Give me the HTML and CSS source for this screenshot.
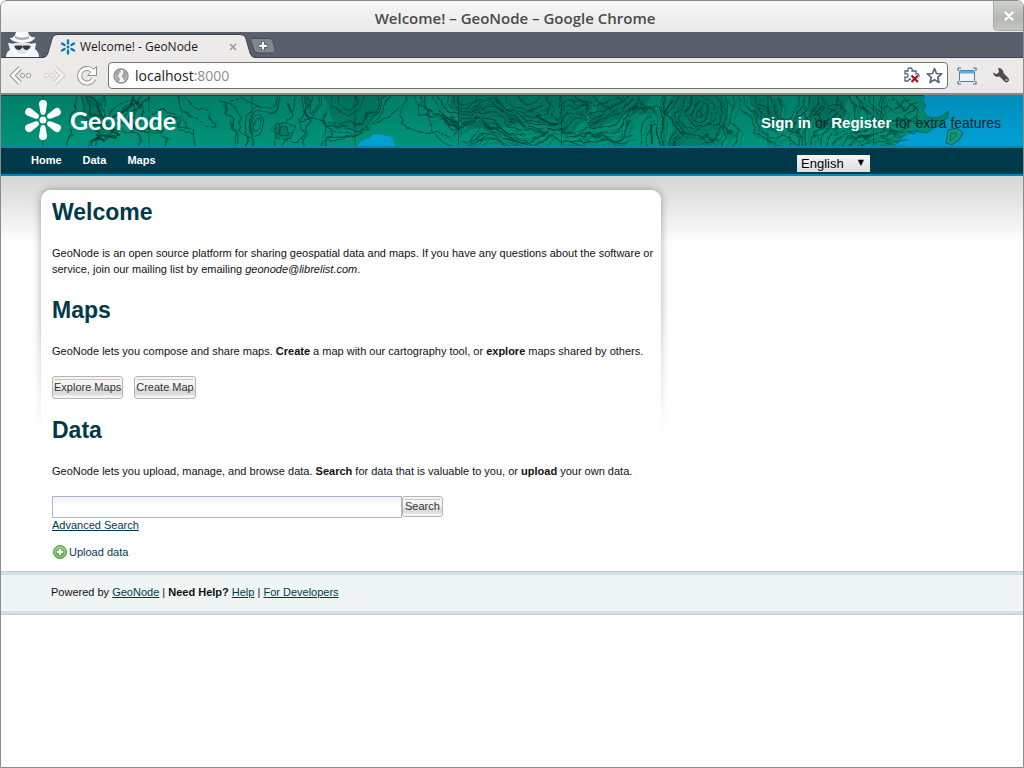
FILE: index.html
```html
<!DOCTYPE html>
<html lang="en">
<head>
<meta charset="utf-8">
<title>Welcome! - GeoNode</title>
<link rel="stylesheet" href="styles.css">
</head>
<body>
<div class="window">
  <div class="titlebar">
    <span class="title">Welcome! – GeoNode – Google Chrome</span>
    <button class="close" aria-label="Close window"><svg width="10" height="10" viewBox="0 0 10 10"><path d="M1.5 1.5l7 7M8.5 1.5l-7 7" stroke="#fff" stroke-width="2.4" stroke-linecap="round"/></svg></button>
  </div>

  <div class="tabstrip">
    <svg class="spy" width="34" height="25" viewBox="0 0 34 25">
      <path d="M1 25q0-5 4-7l-2-7q6 1 10 1h8q5 0 10-1l-1 6q4 3 4 8z" fill="#f1f4f8"/>
      <path d="M9 11h16v4q-1 8-8 8t-8-8z" fill="#dfe4ec"/>
      <path d="M12 13.500h4.500l1 .8 1-.8H23l3 .5-2 3q-3 2-5 0l-1.500-2-1.500 2q-2 2-5 0l-2-3z" fill="#343941"/>
      <path d="M8 17l5 6h8l6-6" fill="none" stroke="#fff" stroke-width="2.500"/>
      <path d="M5 6q5 0 6-6h12q1 6 7 5 0 3-6 5-7 2-13 0-6-2-6-4z" fill="#fafbfc"/>
      <path d="M10 4q7 3 14 0v2.500q-7 3-14 0z" fill="#a9aeb7"/>
    </svg>
    <div class="tab">
      <svg class="tab-edge" width="15" height="24" viewBox="0 0 15 24"><path d="M0 24Q4 23 5 19L9 5Q10 1 14 1h1v23z" fill="#edebe9"/><path d="M0 23.500Q4 23 5 19L9 5Q10 .5 15 .5" fill="none" stroke="#3f454f"/></svg>
      <div class="tab-body">
        <svg class="favicon" width="16" height="16" viewBox="0 0 16 16"><g stroke="#107aa6" stroke-width="2.400" stroke-linecap="round"><path d="M8 1.500v3M8 11.500v3M2 4.500l2.600 1.500M11.400 10l2.600 1.500M14 4.500l-2.600 1.500M4.600 10L2 11.500"/></g><circle cx="8" cy="8" r="1.500" fill="#107aa6"/></svg>
        <span>Welcome! - GeoNode</span>
        <button class="tab-close" aria-label="Close tab"><svg width="8" height="8" viewBox="0 0 8 8"><path d="M1 1l6 6M7 1L1 7" stroke="#999" stroke-width="1.600"/></svg></button>
      </div>
      <svg class="tab-edge" width="15" height="24" viewBox="0 0 15 24"><path d="M15 24Q11 23 10 19L6 5Q5 1 1 1H0v23z" fill="#edebe9"/><path d="M15 23.500Q11 23 10 19L6 5Q5 .5 0 .5" fill="none" stroke="#3f454f"/></svg>
    </div>
    <button class="newtab" aria-label="New tab"><svg width="26" height="16" viewBox="0 0 26 16"><path d="M2 .5h17q3 0 4 3l2 8q1 3-2 3.500H8q-3 0-4-3L1 3Q.5 1 2 .5z" fill="#808791" stroke="#444b55"/><path d="M13 3.500v8.500M8.800 7.800h8.500" stroke="#4a505a" stroke-width="4"/><path d="M13 4v7.500M9.300 7.800h7.500" stroke="#fff" stroke-width="2.200"/></svg></button>
  </div>

  <div class="toolbar">
    <button aria-label="Back"><svg width="24" height="22" viewBox="0 0 24 22"><path d="M11 3L3.500 10.500 11 18" fill="none" stroke="#8f8f8d" stroke-width="4.600"/><path d="M11 3L3.500 10.500 11 18" fill="none" stroke="#fafafa" stroke-width="2.800"/><g fill="#f4f4f3" stroke="#9b9b99"><circle cx="13.500" cy="10.500" r="2.200"/><circle cx="19.500" cy="10.500" r="2.200"/></g></svg></button>
    <button aria-label="Forward"><svg width="24" height="22" viewBox="0 0 24 22"><path d="M12 3l7.500 7.500L12 18" fill="none" stroke="#c9c9c7" stroke-width="4.600"/><path d="M12 3l7.500 7.500L12 18" fill="none" stroke="#f3f3f2" stroke-width="2.800"/><g fill="#efefed" stroke="#cfcfcd"><circle cx="3.500" cy="10.500" r="2.200"/><circle cx="9.500" cy="10.500" r="2.200"/></g></svg></button>
    <button class="reload" aria-label="Reload"><svg width="22" height="22" viewBox="0 0 22 22"><path d="M17.500 14A7.300 7.300 0 1 1 16 5.500" fill="none" stroke="#8f8f8d" stroke-width="5"/><path d="M11.500 10.500h9V1.500l-3 3-3 3z" fill="#fafafa" stroke="#8f8f8d"/><path d="M17.500 14A7.300 7.300 0 1 1 16 5.500l1 2.500" fill="none" stroke="#fafafa" stroke-width="3.200"/></svg></button>
    <div class="address">
      <svg width="16" height="16" viewBox="0 0 16 16"><circle cx="8" cy="8" r="7" fill="#f3f3f3" stroke="#8b8b8b" stroke-width="1.400"/><path d="M2 6q2-4 5-4l1 2-2 1 0 2-2 1 2 1 1 2-1 3Q2 12 2 6zM10 2.500q4 1 4 4.500l-1 4-2 2-1-3-1.500-2L10 6z" fill="#a5a5a5"/></svg>
      <span class="url" role="textbox" aria-label="Address">localhost<i>:8000</i></span>
      <svg width="17" height="17" viewBox="0 0 17 17"><path d="M2 4h3Q4 1 7 1t2 3h4v3q3-1 3 2t-3 2v3H9q-1-2-2-2t-2 2H2v-4q3 1 3-1.500T2 7z" fill="#fff" stroke="#4b627b" stroke-width="1.300"/><path d="M8.500 8.500l6.500 6.500M15 8.500L8.500 15" stroke="#fff" stroke-width="4"/><path d="M8.500 8.500l6.500 6.500M15 8.500L8.500 15" stroke="#b90624" stroke-width="2.200"/></svg>
      <svg class="star" width="17" height="17" viewBox="0 0 17 17"><path d="M8.500 1.500l2 5 5.200.3-4 3.500 1.300 5.200-4.500-2.900L4 15.500l1.300-5.200-4-3.500 5.200-.3z" fill="#fff" stroke="#5c6680" stroke-width="1.700" stroke-linejoin="round"/></svg>
    </div>
    <button class="fit" aria-label="Window size"><svg width="20" height="18" viewBox="0 0 20 18"><path d="M1 4V1h3M16 1h3v3M19 14v3h-3M4 17H1v-3" fill="none" stroke="#3f79a6" stroke-width="1.200"/><rect x="2.500" y="3.500" width="15" height="11" rx="1" fill="#eef3f7" stroke="#4281b0"/><path d="M3 4h14v2.500H3z" fill="#6da5d3"/></svg></button>
    <button aria-label="Settings"><svg width="18" height="17" viewBox="0 0 18 17"><path d="M6 1q5 0 5.500 5l5.200 5.500q1 2-.7 3.300t-3.200 0L7.500 9.500Q2 11 1 5.500l3.500 1.800L7 5z" fill="#4c4c4c"/><circle cx="14.500" cy="13" r="1" fill="#ccc"/></svg></button>
  </div>

  <header class="banner">
    <svg class="map" viewBox="0 0 1022 51" preserveAspectRatio="xMidYMin slice" aria-hidden="true">
      <defs><linearGradient id="land" x1="0" y1="0" x2="0" y2="1"><stop offset="0" stop-color="#007d69"/><stop offset="1" stop-color="#009478"/></linearGradient>
      <linearGradient id="sea" x1="0" y1="0" x2="0" y2="1"><stop offset="0" stop-color="#008cba"/><stop offset="1" stop-color="#00a0d4"/></linearGradient>
      <filter id="wobble" x="0" y="0" width="1022" height="51" filterUnits="userSpaceOnUse"><feTurbulence type="fractalNoise" baseFrequency=".07" numOctaves="2" seed="4" result="n"/><feDisplacementMap in="SourceGraphic" in2="n" scale="11" xChannelSelector="R" yChannelSelector="G"/></filter></defs>
      <rect width="1022" height="51" fill="url(#sea)"/>
      <path d="M0 0h923l-1 6 3 5-3 4 4 7 8 1 7-2 6-5v7l-5 2-1 5-7 2-8 6-12-2-11 4-7 9-1 3H0z" fill="url(#land)"/>
      <path d="M947 35l9-2 6 5-4 7-7 5-6-2 1-6z" fill="#149782" stroke="#075d5b"/>
      <path d="M357 51l3-5 8-3 5-4 9 1 9 2 3 9z" fill="#00a0d4"/>
      <g fill="#003c35" opacity=".22" filter="url(#wobble)">
        <path d="M320-5h65l-9 25-17 16-24-5zM445-5h160l-35 44-48-12-30 8-30-4zM605-5h50l-12 22-32 8-28 14zM670-5h50l10 33-19 23h-42zM800-5h50l-13 42-22-12z"/>
        <path d="M78 0l27 3-5 17 11 23-16-3-13-19zM268 37l9-8 17 9-6 8zM750 0l32 3-11 34-18-15z"/>
      </g>
      <g fill="none" stroke-linejoin="round" filter="url(#wobble)">
      <g id="contours" stroke="#003a2f" stroke-width="1.100" stroke-opacity=".72">
        <path d="M68 55l2-16-4-13 8-12-2-18M76-4q10 26 17 35t3 24M82-4q4 17 11 23t9 14l9 4-8 6-22 12M86-4q11 8 11 21l8 15 9 6M91 2q10 5 12 12t0 13q9 6 12 14l-19 4-9 10M96-4q12 6 9 19l-2 10 12 13"/>
        <path d="M84 3q12-1 13 9t6 13-3 5-9-9-7-18zM88 6q8 2 8 10l3 7M112 15q5-10 14-10l13 3q8 12-1 19l-11 9-15-2q-4-10 0-19zM117 17q11-10 18-5 4 10-9 17-9 0-9-12z"/>
        <path d="M143-4l-5 13-11 4-5 9-12 5M147-3q-2 13-11 17l-9 7 4 14 9 5-6 15M129 24q8 9 17 11 16 2 22 7l-5 13M132 30q9 9 20 9 11 0 12-7l8-7 7 8q11 0 15 5l-2 17M152 22l9 8 8-7 9 2 2 12q9 0 14 7M150 20q12-8 17-2l13 4 9 12"/>
        <path d="M181-4q6 12 15 17 11 2 16 11l2 8-7-2-12-7-14-7-7-20M218 8l9 4-2 5 8 8-3 9 7 6-1 15M224 10q9 0 11 5l5 10-3 8 8 6 2 16M230 8l8-4 13 2 5 5M229 25l2 8 5 3-4 19"/>
        <path d="M246 55q1-17-2-28 0-12 11-16l12 3q9 0 9-17M252 55l-3-22q-3-16 8-17l9 4q11 0 11-11l2-13M251 23q11-4 14 8-4 11-12 8-6-8-2-16zM254 26q8-2 7 5-5 6-8 1zM273 55q0-12 5-18l-2-9q15 0 15-9l3-23M278 55l6-8 10 2q7 0 7-10l-3-15q7 0 7-12V-4M273 31q7-9 19 2 2 7-8 13-9-2-11-15zM279 32q8-1 9 5-6 6-9-1zM303 55v-18l7-12-5-9 7-20"/>
        <path d="M303-4q-4 24 8 26 8-3 8-26M307-4q-1 20 5 22 5-4 4-22M325 11l-4 15 10 8-7 21M299 27q12-6 16-4l10 7-3 25M330-4q0 18 3 18l14 7 11-5q2-16 2-20M335-4q0 15 4 15l11 3 5-6-1-12M327 28q10-3 15-1 15 3 18 1 15-15 15-15l8-17M326 31q14-3 20 1 13 3 16 1l13-15 12-22M326 36q14-2 20 2 11 1 14-2 13-8 18-14l12-26M326 42q19 2 37-5l18-12 17-14M325 47q13 1 22-6l15-4"/>
        <path d="M404 2q-5 17-2 22l-2 5q3 9 9 9l17-2 23 4q8 0 8-13l-7-4-16-1q-15-3-15-9l1-17M412-4q0 14 4 14l17 8 19 8q6 8 6 8l14-9q10-3 10 2l15 8M419-4q4 18 8 18l18 14q9 5 19 5l13-9q10-1 16 4l13 10 19 2"/>
        <path d="M430-4q8 27 16 27l12 5q8 0 16-10 9-3 18-1l14 10q10 8 20 8l22 6M437-4q6 21 12 21l12 5q7 0 14-8l17-2q7 0 15 12l18 8 22 8M444-4q4 17 9 17l9 5q7 0 13-7 9-6 17-3 8 6 16 12 9 9 18 9l22 3M450-4l7 15 9 3q6-8 11-8l17-2 18 14 13 7 20 3M457-4q3 11 5 11h9l9-11M492-4q11 20 21 20l17 5q8 0 15-5l3-16M502-4q8 16 16 16l13 4 11-4M510-4l15 13q6 0 12-2l4-11M423-4q10 53 20 53l17 5q9 0 18-10l18 2q8 0 15 12l18 1 18 8"/>
        <path d="M457 46q6 2 12 0l13-17q5 0 10 3 9 0 18 8l17 6 24-9q7-2 13-2l19 7q7-5 13-1 5 0 10 4l21 1M467 51l10-10q8-6 15-2l17 5 22 7M483 31q5 0 10 3 10 4 19 10l17 4q11 0 21-6l20 5 16 4M475 47q7-7 13-7l18 8 10 3M540 30q8 4 16 1 6-12 12-12l15-2q2 9 5 9 7 0 14-3l14-9M547 36q9 2 17-3l8-8q6-6 11-2l8 7 11-7 16-4 14-17"/>
        <path d="M548 17l8 8q6-12 12-12l15-3 9 13 8-2q7-10 13-10l14-11M562-4l-3 16 10-4q6-4 11-2l11 12 12-2q9-6 18-16M575-4q4 13 8 13l11 3 13-7 11-3M589-4q7 13 14 13l12 2 13-11M559 37q12-3 22 0 12-5 24-4 11-1 17-14l13-10 4-9M564 43l17-4 17 1q7 2 14-1l11-9q5-17 10-17l10-3M569 47q15-4 24-2l14 1q9 0 17-7 7-24 14-24l12-4q6 8 6 16l3 28M636 5l8 11q6-6 12-4 6 0 6 12l-1 31M638 55l2-20q4-17 8-17M645 53l5-26 6 4 2 24M630 42l-9-4q0-10 6-16"/>
        <path d="M662-4v59M666-3l-2 19 9 11-5 28M677-4l-4 15-7 8 10 14-6 22M686-4q-6 23-12 23l7 17-12 19M694-4q-7 22-14 22 0 14 7 14 6 6 12 3l10-4q9-3 9 3 0 10-5 10l-10 3-17 8M688 8q8-8 15-5 10 0 10 6 2 14-1 18-6 8-12 6-10 0-10-6-5-8-2-19zM692 12q6-6 11-4 7 1 5 6 1 8-2 10-4 5-9 3-9-4-5-15zM696 15q8-2 7 5-5 4-7-5zM677 34l19 9 12-3 11 7"/>
        <path d="M716-4q2 21 4 21l-3 15 9 8-7 15M724-4l2 22-4 14 9 9M730-4l4 18-4 14q6 5 6 11l-7 16M737-4q1 19 3 19l11 4q0 18 6 18 8 11 16 11l14 7M742-4q2 17 5 17l10 5q-2 15 1 15 7 10 15 10l18-2 8 14M748-4q2 15 5 15l10 5q-2 12 1 12 5 8 11 8l14-4q11 3 11 9l1 14M756-4q-1 13 1 13l11 3q-1 14 2 14 10-2 11 1l7 9 9 2q8-14 9-14l-3-14"/>
        <path d="M767-4q7 17 6 25l14 9 10-8 8-26M775-4q8 21 4 25l8 4 8-8 4-21M789 55l2-24q18-18 18-24l-2-11M797 55l1-23q17-16 17-22l1-14M804 55v-18q6-22 17-22V-4M810 55l4-17q14-12 14-15l12-27M817 55q1-21 10-23l15-4 3-12-9-13M823 55l7-17q9-2 18-2 8-2 8-12-1-17-6-17l-7-11M829 55l8-14q9-1 17-1 11-2 11-8l-1-13-11-23M837 55l11-12 23-2q11-2 11-10l-3-12 6-23"/>
        <path d="M811 23q5-11 15-14 14-2 14 3 4 5 1 9-2 8-9 8l-14 1zM816 22q7-9 15-9 6 0 6 5 0 6-5 6l-9 3zM845 55l9-11q13-6 26-2l15 6 12-3M854 55l9-8 15 1 9 3M855-4l2 16 10 8q6 5 4 10l-10 9M864-4l1 14q12 5 12 10 0 11 2 11l14 5q14 0 14-8l-4-8 12-7M871-4q-1 13 1 13l10 9q0 9 5 9l15-3q7 0 13 5l15-4M881-4l-2 13 15 7 14-12M891-4v11l12 8 15-8M900-4l6 12M872 31q13-9 23-6l13 1 7-7M889 51l-8-9q8-10 15-8l15 5 5-6M908 9q10 4 10 9l-7 10"/>
      </g>
      </g>
      <svg x="435" width="470" height="51" viewBox="435 0 470 51" opacity=".38"><g transform="translate(4 4)"><g filter="url(#wobble)" fill="none"><use href="#contours"/></g></g></svg>
      <path d="M923 0l-1 6 3 5-3 4 4 7 8 1 7-2 6-5v7l-5 2-1 5-7 2-8 6-12-2-11 4-7 9M950 38l6 0-3 5-4 3z" fill="none" stroke="#00584c" opacity=".7"/>
      <g fill="none" stroke="#002e25" stroke-linecap="round"><path d="M132 1l-2 10-8 6-10 5M132 3l6 9M89 47l12-7 14 3M96 40l7 6M109 35l9 5M443 22l5 7 6 2M536 21l6 4 8 4h6M287 9l3 8M650 30l1 18M671 6l-8 12M632 15l4-4" stroke-width="2" opacity=".65"/><path d="M42 0v51M148 0v51M251 0v51M354 0v51M457.500 0v51M560.500 0v51M663 0v51M767 0v51M872.500 0v51" opacity=".45"/></g>
      <path d="M0 .5h923" stroke="#233f26"/>
    </svg>
    <div class="banner-row">
      <a class="logo" href="#"><svg width="40" height="42" viewBox="0 0 40 42"><g fill="#fff"><circle cx="20" cy="21" r="3.500"/><path id="petal" d="M16 5q0-4 4-4t4 4l-1.500 9q-.5 2-2.500 2t-2.500-2z"/><use href="#petal" transform="rotate(60 20 21)"/><use href="#petal" transform="rotate(120 20 21)"/><use href="#petal" transform="rotate(180 20 21)"/><use href="#petal" transform="rotate(240 20 21)"/><use href="#petal" transform="rotate(300 20 21)"/></g></svg><span>GeoNode</span></a>
      <div class="login"><a href="#">Sign in</a> or <a href="#">Register</a> for extra features</div>
    </div>
  </header>

  <nav class="nav">
    <a href="#">Home</a><a href="#">Data</a><a href="#">Maps</a>
    <span class="language"><select aria-label="Language"><option>English</option></select></span>
  </nav>

  <main class="content">
    <div class="panel">
      <div class="panel-glow"></div>
      <div class="panel-body">
        <h1>Welcome</h1>
        <p>GeoNode is an open source platform for sharing geospatial data and maps. If you have any questions about the software or service, join our mailing list by emailing <em>geonode@librelist.com</em>.</p>
        <h1>Maps</h1>
        <p>GeoNode lets you compose and share maps. <b>Create</b> a map with our cartography tool, or <b>explore</b> maps shared by others.</p>
        <div class="actions"><button class="btn">Explore Maps</button><button class="btn">Create Map</button></div>
        <h1>Data</h1>
        <p>GeoNode lets you upload, manage, and browse data. <b>Search</b> for data that is valuable to you, or <b>upload</b> your own data.</p>
        <form class="search"><input type="text" aria-label="Search data"><button class="btn" type="button">Search</button></form>
        <a class="advanced" href="#">Advanced Search</a>
        <a class="upload" href="#"><svg width="16" height="16" viewBox="0 0 16 16"><defs><linearGradient id="add" x1="0" y1="0" x2="0" y2="1"><stop offset="0" stop-color="#8cc97c"/><stop offset="1" stop-color="#4ba33d"/></linearGradient></defs><circle cx="8" cy="8" r="6.500" fill="url(#add)" stroke="#50a046"/><circle cx="8" cy="8" r="5" fill="none" stroke="#a5d69a"/><path d="M8 5v6M5 8h6" stroke="#fff" stroke-width="2.200"/></svg>Upload data</a>
      </div>
    </div>
  </main>

  <footer class="footer">Powered by <a href="#">GeoNode</a> | <b>Need Help?</b> <a href="#">Help</a> | <a href="#">For Developers</a></footer>
</div>
</body>
</html>
```
FILE: styles.css
```css
* { box-sizing: border-box; }
body {
  margin: 0;
  background: #fff;
  color: #111;
  font: 11px/16px "Liberation Sans", Arial, sans-serif;
}
button { border: 0; padding: 0; background: none; font: inherit; }
svg { display: block; flex: none; }

.window {
  display: flex;
  flex-direction: column;
  min-height: 100vh;
  border: 1px solid #8b8b8b;
  border-radius: 7px 7px 0 0;
  overflow: hidden;
}

.titlebar {
  display: grid;
  grid-template-columns: 1fr 30px;
  height: 31px;
  background: linear-gradient(#f7f7f7, #e9e9e9);
}
.title {
  padding-left: 36px;
  text-align: center;
  color: #4a4a4a;
  font: 600 15px/34px "Open Sans", sans-serif;
}
.close {
  display: grid;
  place-items: center;
  height: 30px;
  border: 1px solid #aaacaa;
  border-width: 0 0 1px 1px;
  border-radius: 0 0 0 5px;
  background: linear-gradient(#cfd1cf, #b4b7b4 60%, #c4c7c4);
}

.tabstrip {
  display: flex;
  align-items: flex-end;
  height: 26px;
  padding-left: 4px;
  background: #59606c;
  border-bottom: 1px solid #3c424c;
}
.tab { display: flex; margin: 0 0 -1px 4px; }
.tab-body {
  display: flex;
  align-items: center;
  width: 182px;
  background: #edebe9;
  border-top: 1px solid #3f454f;
  color: #1a1a1a;
  font: 12px/22px "Open Sans", sans-serif;
}
.tab-body span { flex: 1; padding-left: 4px; }
.favicon { margin-left: 2px; }
.tab-close { margin-right: 3px; }
.newtab { align-self: center; margin: 2px 0 0 -5px; }

.toolbar {
  display: flex;
  align-items: center;
  gap: 10px;
  height: 37px;
  padding: 1px 13px 1px 8px;
  background: linear-gradient(#edebe9, #e9e8e6);
  border-bottom: 2px solid #8a8885;
}
.reload { margin-left: -1px; }
.address {
  display: flex;
  flex: 1;
  align-items: center;
  gap: 6px;
  height: 27px;
  padding: 0 4px;
  background: #fff;
  border: 1px solid #74736f;
  border-radius: 4px;
}
.url { flex: 1; color: #1a1a1a; font: 14px/24px "Open Sans", sans-serif; }
.url i { color: #8c8c8c; font-style: normal; }
.fit { margin: 0 5px 0 -1px; }

.banner {
  display: grid;
  height: 51px;
  overflow: hidden;
  background: #008cba;
}
.map, .banner-row { grid-area: 1 / 1; }
.map { width: 100%; min-height: 51px; }
.banner-row {
  z-index: 1;
  display: flex;
  justify-content: space-between;
  align-items: flex-start;
  padding: 4px 22px 0;
}
.logo {
  display: flex;
  align-items: center;
  gap: 7px;
  color: #fff;
  text-decoration: none;
  font: bold 25px/42px Lato, sans-serif;
}
.login { padding-top: 14px; color: #14252b; font-size: 14px; line-height: 20px; }
.login a { color: #fff; font-weight: bold; font-size: 15px; text-decoration: none; }

.nav {
  display: flex;
  align-items: center;
  gap: 21px;
  height: 30px;
  padding: 0 153px 0 30px;
  background: #003a4a;
  border: solid #0087b4;
  border-width: 2px 0;
}
.nav a { padding-bottom: 2px; color: #fff; font-weight: bold; text-decoration: none; }
.language { position: relative; margin: 5px 0 0 auto; }
.language::after {
  content: "▼";
  position: absolute;
  top: 0;
  right: 6px;
  color: #000;
  font: 8px/16px "DejaVu Sans", sans-serif;
  pointer-events: none;
}
.language select {
  display: block;
  width: 73px;
  height: 17px;
  padding: 0 4px;
  appearance: none;
  border: 0;
  border-radius: 0;
  background: linear-gradient(#f6f6f6, #dedede);
  color: #000;
  font: 13px/17px "Liberation Sans", Arial, sans-serif;
}

.content {
  padding: 14px 40px 0;
  background: linear-gradient(#d5d5d5, #fff 68px) no-repeat;
}
.panel { position: relative; max-width: 620px; }
.panel-glow {
  position: absolute;
  inset: -10px -10px auto;
  height: 256px;
  overflow: hidden;
  mask-image: linear-gradient(#000 50%, transparent);
}
.panel-glow::before {
  content: "";
  position: absolute;
  inset: 10px 10px -20px;
  border-radius: 10px;
  background: #fff;
  box-shadow: 0 0 8px rgba(0, 0, 0, .35);
}
.panel-body {
  position: relative;
  padding: 8px 6px 11px 11px;
  border-radius: 10px 10px 0 0;
  background: #fff;
}
h1 { margin: 0 0 19px; color: #003a4a; font-size: 23px; line-height: 28px; }
p { margin: 0 0 19px; }
a { color: #003a4a; }
p:has(+ div), p:has(+ form) { margin-bottom: 17px; }

.actions { display: flex; gap: 11px; margin-bottom: 17px; }
.btn {
  height: 23px;
  padding: 0 1px 2px;
  border: 1px solid #b4b4b4;
  border-radius: 3px;
  background: linear-gradient(#b4cbee, #b4cbee) 50% 2px / calc(100% - 4px) 1px no-repeat,
    linear-gradient(#f4f4f4 50%, #dbd9db 60%, #dedede 85%, #f5f5f5 90%);
  color: #333;
}
.search { display: flex; }
.search input {
  width: 350px;
  height: 22px;
  border: 1px solid #b3b5cb;
  background: linear-gradient(#eef2f2, #fff 9px);
  font: inherit;
}
.search .btn { height: 21px; padding: 0 2px 2px; }
.advanced { display: table; margin-top: -1px; }
.upload {
  display: flex;
  align-items: center;
  gap: 1px;
  margin-top: 11px;
  text-decoration: none;
}

.footer {
  padding: 9px 50px 10px;
  border-top: 1px solid #ccc;
  border-bottom: 1px solid #ccc;
  background: #eff5f5;
  box-shadow: inset 0 3px #cde0e6, inset 0 -3px #cde0e6;
  line-height: 23px;
}
```
